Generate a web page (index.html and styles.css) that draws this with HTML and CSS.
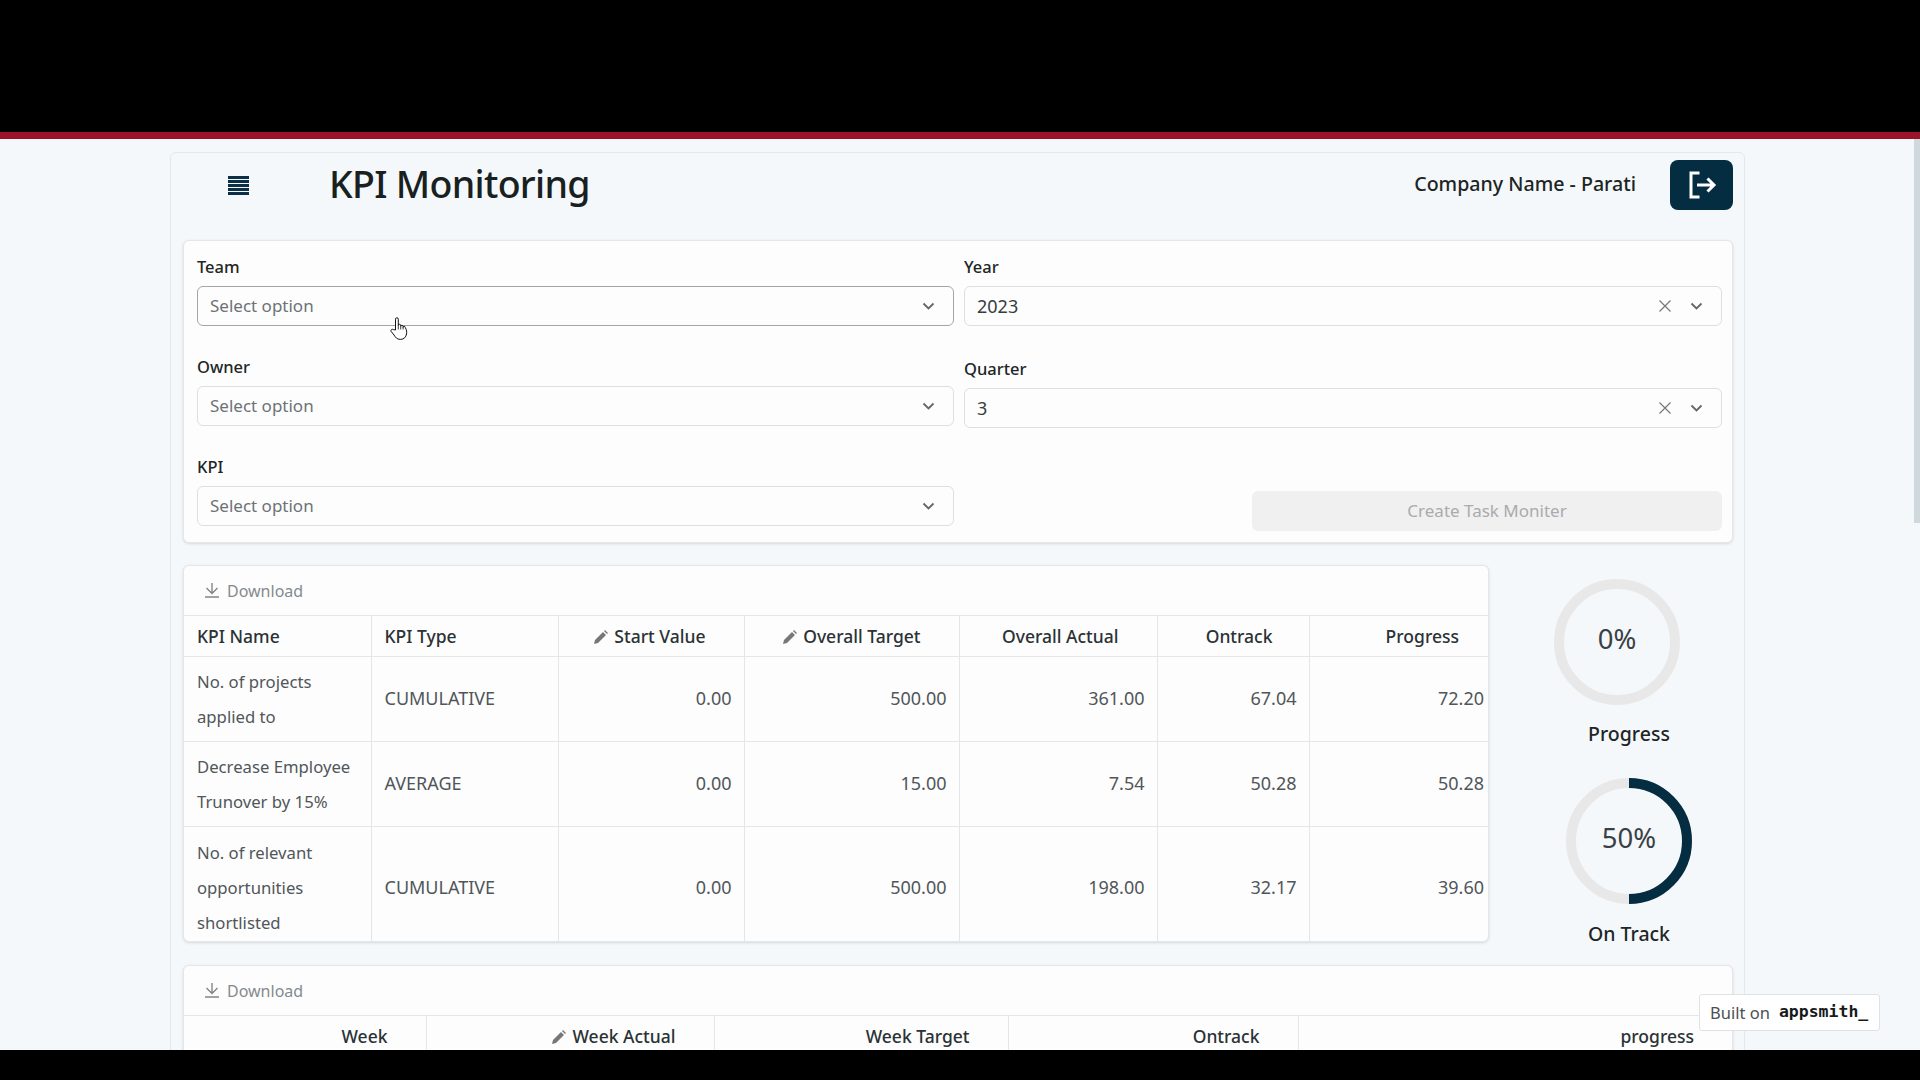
FILE: index.html
```html
<!DOCTYPE html>
<html lang="en">
<head>
    <meta charset="UTF-8">
    <title>KPI Monitoring</title>
    <link rel="stylesheet" href="styles.css">
</head>
<body>
    <svg class="defs" width="0" height="0">
        <symbol id="chevron" viewBox="0 0 12 8"><path d="M1 1.5 L6 6.5 L11 1.5" fill="none" stroke="#666" stroke-width="1.8"/></symbol>
        <symbol id="cross" viewBox="0 0 12 12"><path d="M0.5 0.5 L11.5 11.5 M11.5 0.5 L0.5 11.5" fill="none" stroke="#777" stroke-width="1.2"/></symbol>
        <symbol id="download" viewBox="0 0 16 15"><path d="M8 0 V10 M2.5 5 L8 10.5 L13.5 5 M1 14 H15" fill="none" stroke="#858585" stroke-width="1.4"/></symbol>
        <symbol id="pencil" viewBox="0 0 14 14"><path d="M0 14 L1 10 L9 2 L12 5 L4 13 Z M10 1 L11 0 L14 3 L13 4 Z" fill="#777"/></symbol>
    </svg>

    <div class="blackbar top"></div>
    <div class="redbar"></div>

    <div class="main">
        <div class="page">
            <div class="header">
                <svg class="menu" width="21" height="19" viewBox="0 0 21 19">
                    <rect width="21" height="3" y="0" fill="#0b2f44"/>
                    <rect width="21" height="3" y="4" fill="#0b2f44"/>
                    <rect width="21" height="3" y="8" fill="#0b2f44"/>
                    <rect width="21" height="3" y="12" fill="#0b2f44"/>
                    <rect width="21" height="3" y="16" fill="#0b2f44"/>
                </svg>
                <h1>KPI Monitoring</h1>
                <span class="company">Company Name - Parati</span>
                <a class="logout">
                    <svg width="30" height="30" viewBox="0 0 30 30"><path d="M12.5 3 H4 V27 H12.5 M10 15 H27 M20.5 8.5 L27 15 L20.5 21.5" fill="none" stroke="#fff" stroke-width="3"/></svg>
                </a>
            </div>

            <div class="card filters">
                <div class="filter-col">
                    <div class="field">
                        <label>Team</label>
                        <div class="select hover">
                            <span class="placeholder">Select option</span>
                            <svg class="chev"><use href="#chevron"/></svg>
                        </div>
                    </div>
                    <div class="field">
                        <label>Owner</label>
                        <div class="select">
                            <span class="placeholder">Select option</span>
                            <svg class="chev"><use href="#chevron"/></svg>
                        </div>
                    </div>
                    <div class="field">
                        <label>KPI</label>
                        <div class="select">
                            <span class="placeholder">Select option</span>
                            <svg class="chev"><use href="#chevron"/></svg>
                        </div>
                    </div>
                </div>
                <div class="filter-col">
                    <div class="field">
                        <label>Year</label>
                        <div class="select">
                            <span class="value">2023</span>
                            <svg class="clear"><use href="#cross"/></svg>
                            <svg class="chev"><use href="#chevron"/></svg>
                        </div>
                    </div>
                    <div class="field second">
                        <label>Quarter</label>
                        <div class="select">
                            <span class="value">3</span>
                            <svg class="clear"><use href="#cross"/></svg>
                            <svg class="chev"><use href="#chevron"/></svg>
                        </div>
                    </div>
                    <button class="create" disabled>Create Task Moniter</button>
                </div>
            </div>

            <div class="kpi-row">
                <div class="card table-card kpi-table">
                    <div class="toolbar">
                        <svg class="dl"><use href="#download"/></svg>
                        <span>Download</span>
                    </div>
                    <table>
                        <colgroup>
                            <col class="c187"><col class="c187"><col class="c186"><col class="c215"><col class="c198"><col class="c152"><col>
                        </colgroup>
                        <thead>
                            <tr>
                                <th class="left">KPI Name</th>
                                <th class="left">KPI Type</th>
                                <th><svg class="pen"><use href="#pencil"/></svg>Start Value</th>
                                <th><svg class="pen"><use href="#pencil"/></svg>Overall Target</th>
                                <th>Overall Actual</th>
                                <th class="ontrack">Ontrack</th>
                                <th class="wide">Progress</th>
                            </tr>
                        </thead>
                        <tbody>
                            <tr class="r85">
                                <td class="left">No. of projects applied to</td>
                                <td class="left caps">CUMULATIVE</td>
                                <td>0.00</td><td>500.00</td><td>361.00</td><td>67.04</td><td class="tight">72.20</td>
                            </tr>
                            <tr class="r85">
                                <td class="left">Decrease Employee Trunover by 15%</td>
                                <td class="left caps">AVERAGE</td>
                                <td>0.00</td><td>15.00</td><td>7.54</td><td>50.28</td><td class="tight">50.28</td>
                            </tr>
                            <tr class="r115">
                                <td class="left">No. of relevant opportunities shortlisted</td>
                                <td class="left caps">CUMULATIVE</td>
                                <td>0.00</td><td>500.00</td><td>198.00</td><td>32.17</td><td class="tight">39.60</td>
                            </tr>
                        </tbody>
                    </table>
                </div>

                <div class="gauges">
                    <div class="gauge shifted">
                        <svg width="126" height="126" viewBox="0 0 126 126">
                            <circle cx="63" cy="63" r="58" fill="none" stroke="#e8e8e8" stroke-width="10"/>
                            <text x="63" y="70" text-anchor="middle" class="gauge-num">0%</text>
                        </svg>
                    </div>
                    <div class="gauge-label first">Progress</div>
                    <div class="gauge">
                        <svg width="126" height="126" viewBox="0 0 126 126">
                            <circle cx="63" cy="63" r="58" fill="none" stroke="#e8e8e8" stroke-width="10"/>
                            <path d="M63 5 A58 58 0 0 1 63 121" fill="none" stroke="#042d41" stroke-width="10"/>
                            <text x="63" y="70" text-anchor="middle" class="gauge-num">50%</text>
                        </svg>
                    </div>
                    <div class="gauge-label second">On Track</div>
                </div>
            </div>

            <div class="card table-card week-table">
                <div class="toolbar">
                    <svg class="dl"><use href="#download"/></svg>
                    <span>Download</span>
                </div>
                <table>
                    <colgroup>
                        <col class="c242"><col class="c288"><col class="c294"><col class="c290"><col>
                    </colgroup>
                    <thead>
                        <tr>
                            <th class="wk">Week</th>
                            <th class="wk"><svg class="pen"><use href="#pencil"/></svg>Week Actual</th>
                            <th class="wk">Week Target</th>
                            <th class="wk">Ontrack</th>
                            <th class="wk">progress</th>
                        </tr>
                    </thead>
                </table>
            </div>
        </div>

        <div class="scrollbar"></div>
        <div class="built">
            <span class="built-on">Built on</span>
            <span class="brand">appsmith_</span>
        </div>
        <svg class="cursor" width="18" height="23" viewBox="0 0 18 23">
            <path d="M5.5 13 V2.2 a1.4 1.4 0 0 1 2.8 0 V8.5 a1.2 1.2 0 0 1 2.4 0 V9.5 a1.2 1.2 0 0 1 2.4 0 V10.5 a1.1 1.1 0 0 1 2.2 0 C16.6 13 17 15 16.5 17 C16 20 14 22.4 10.5 22.4 C7 22.4 5.5 20.5 4 18 L1.2 14.5 C0.3 13 2 11.5 3.3 12.6 Z" fill="#fff" stroke="#111" stroke-width="1"/>
            <path d="M8.3 8.5 V12.5 M10.7 9.5 V12.5 M13.1 10.5 V12.5" stroke="#111" stroke-width="0.8" fill="none"/>
        </svg>
    </div>

    <div class="blackbar bottom"></div>
</body>
</html>
```

FILE: styles.css
```css
* {
    margin: 0;
    padding: 0;
    box-sizing: border-box;
}
body {
    width: 1920px;
    height: 1080px;
    overflow: hidden;
    display: flex;
    flex-direction: column;
    background: #f4f8fa;
    font-family: "Noto Sans", "Open Sans", Arial, sans-serif;
    font-size: 16px;
    color: #1c2424;
}
.defs {
    position: absolute;
}
.blackbar {
    background: #000;
    flex: none;
}
.blackbar.top {
    height: 132px;
}
.blackbar.bottom {
    height: 30px;
}
.redbar {
    height: 7px;
    flex: none;
    background: #9b1229;
}
.main {
    flex: 1;
    position: relative;
    overflow: hidden;
    padding: 13px 0 0 170px;
}
.page {
    width: 1575px;
    height: 920px;
    padding: 0 11px 0 12px;
    border: 1px solid #e4e8eb;
    border-radius: 6px;
}

/* header */
.header {
    height: 87px;
    display: flex;
    align-items: flex-start;
    padding-top: 7px;
}
.menu {
    margin: 16px 0 0 45px;
    flex: none;
}
h1 {
    margin: -4px 0 0 80px;
    font-size: 37.5px;
    font-weight: 500;
    line-height: 56px;
    color: #18211f;
    flex: 1;
    letter-spacing: -0.7px;
}
.company {
    font-size: 19.6px;
    font-weight: 500;
    line-height: 48px;
    margin-right: 34px;
}
.logout {
    width: 63px;
    height: 50px;
    background: #042d41;
    border-radius: 8px;
    display: flex;
    align-items: center;
    justify-content: center;
}

/* cards */
.card {
    background: #fdfdfd;
    border: 1px solid #e4e7ea;
    border-radius: 6px;
    box-shadow: 0 1px 3px rgba(0, 0, 0, 0.12);
}
.filters {
    height: 303px;
    display: flex;
    gap: 10px;
    padding: 0 10px 0 13px;
}
.filter-col {
    flex: 1;
    display: flex;
    flex-direction: column;
}
.filter-col:first-child {
    flex: none;
    width: 757px;
}
.field {
    height: 100px;
    display: flex;
    flex-direction: column;
}
.field label {
    font-size: 16.5px;
    font-weight: 500;
    line-height: 24px;
    margin-top: 14px;
    margin-bottom: 7px;
    color: #1e2626;
}
.field.second {
    height: 103px;
}
.field.second label {
    margin-top: 16px;
    margin-bottom: 7px;
}
.select {
    height: 40px;
    border: 1px solid #dcdfe2;
    border-radius: 6px;
    background: #fdfdfd;
    display: flex;
    align-items: center;
    padding: 0 18px 0 12px;
}
.select.hover {
    border-color: #a3a6a8;
}
.select span {
    flex: 1;
    font-size: 17px;
    line-height: 24px;
    padding-bottom: 1px;
}
.placeholder {
    color: #6d7276;
}
.select .value {
    color: #363c3f;
    font-size: 18px;
}
.clear {
    width: 12px;
    height: 12px;
    margin-right: 19px;
}
.chev {
    width: 13px;
    height: 8px;
}
.create {
    width: 470px;
    height: 40px;
    margin: 47px 0 0 auto;
    border: none;
    border-radius: 6px;
    background: #f0f0f0;
    color: #a9abac;
    font-family: inherit;
    font-size: 17px;
    padding-bottom: 2px;
}

/* tables */
.kpi-row {
    display: flex;
    height: 377px;
    margin-top: 22px;
}
.table-card {
    overflow: hidden;
}
.kpi-table {
    width: 1306px;
    flex: none;
}
.toolbar {
    height: 50px;
    display: flex;
    align-items: center;
    padding-left: 20px;
    border-bottom: 1px solid #e4e7ea;
    color: #858a8d;
    font-size: 16px;
}
.dl {
    width: 16px;
    height: 15px;
    margin-right: 7px;
}
table {
    width: 100%;
    table-layout: fixed;
    border-collapse: collapse;
}
.c187 { width: 187px; }
.c186 { width: 186px; }
.c215 { width: 215px; }
.c198 { width: 198px; }
.c152 { width: 152px; }
.c242 { width: 242px; }
.c288 { width: 288px; }
.c294 { width: 294px; }
.c290 { width: 290px; }
th, td {
    text-align: right;
    padding: 0 12px;
    border-right: 1px solid #e4e7ea;
}
th:last-child, td:last-child {
    border-right: none;
}
th {
    height: 40px;
    font-size: 17.5px;
    font-weight: 500;
    color: #2b3235;
    border-bottom: 1px solid #e4e7ea;
    padding-right: 38px;
    white-space: nowrap;
}
td {
    font-size: 18px;
    line-height: 35px;
    color: #50565a;
    border-bottom: 1px solid #e4e7ea;
}
tr:last-child td {
    border-bottom: none;
}
th.left, td.left {
    text-align: left;
    padding-left: 13px;
    padding-right: 8px;
}
td.left {
    font-size: 16.7px;
}
td.caps {
    font-size: 18px;
}
th.ontrack {
    padding-right: 36px;
}
th.wide {
    padding-right: 29px;
}
td.tight {
    padding-right: 4px;
}
th.wk {
    padding-right: 38px;
}
.r85 {
    height: 85px;
}
.r115 {
    height: 115px;
}
.r115 td {
    padding-top: 7px;
}
.pen {
    width: 14px;
    height: 14px;
    margin-right: 6px;
    vertical-align: -1px;
}
.week-table {
    margin-top: 23px;
    height: 140px;
}

/* gauges */
.gauges {
    flex: 1;
    display: flex;
    flex-direction: column;
    align-items: center;
    padding: 14px 0 0 36px;
}
.gauge {
    height: 126px;
    flex: none;
}
.gauge.shifted {
    margin-right: 25px;
}
.gauge-num {
    font-family: "Noto Sans", "Open Sans", Arial, sans-serif;
    font-size: 27.5px;
    fill: #3a4043;
}
.gauge-label {
    font-size: 19.5px;
    font-weight: 500;
    line-height: 28px;
    margin-top: 15px;
    color: #1e2626;
}
.gauge-label.first {
    margin-bottom: 30px;
}
.gauge-label.second {
    margin-top: 16px;
}

/* things lying over the page */
.scrollbar {
    position: absolute;
    top: 0;
    right: 0;
    width: 6px;
    height: 384px;
    background: #cfd8dc;
}
.built {
    position: absolute;
    left: 1699px;
    top: 855px;
    width: 181px;
    height: 37px;
    background: #fff;
    border: 1px solid #dfe2e4;
    border-radius: 3px;
    display: flex;
    align-items: center;
    gap: 9px;
    padding-left: 10px;
}
.built-on {
    font-size: 16.5px;
    color: #4b5053;
}
.brand {
    font-family: "DejaVu Sans Mono", "Liberation Mono", monospace;
    font-size: 16.5px;
    font-weight: 700;
    color: #17191a;
    margin-bottom: 3px;
}
.cursor {
    position: absolute;
    left: 390px;
    top: 178px;
}
```
